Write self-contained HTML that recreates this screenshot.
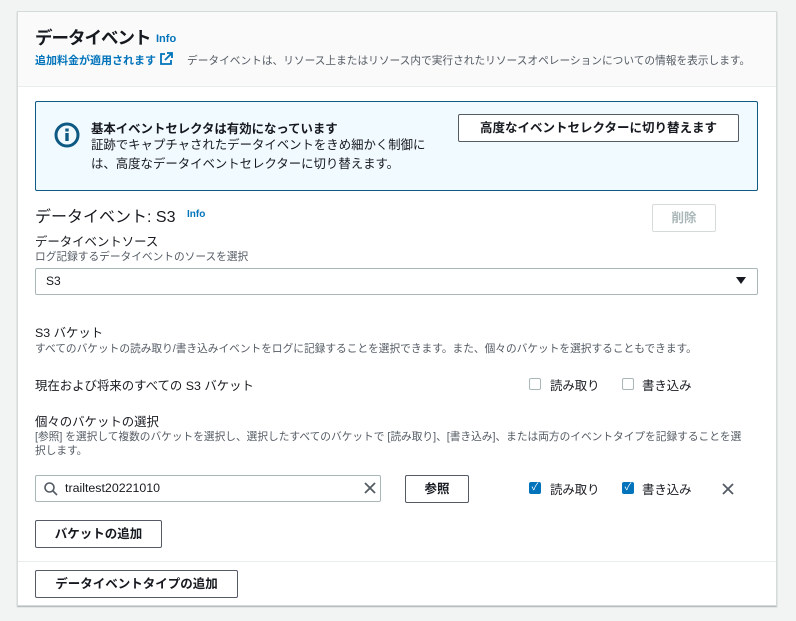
<!DOCTYPE html>
<html><head><meta charset="utf-8"><style>
*{box-sizing:border-box;margin:0;padding:0}
body{width:796px;height:621px;background:#f2f3f3;font-family:"Liberation Sans","Noto Sans CJK JP",sans-serif;color:#16191f;position:relative;overflow:hidden}
.a{position:absolute;white-space:nowrap}
.card{position:absolute;left:17px;top:11px;width:760px;height:595px;background:#fff;border:1px solid #d5dbdb;box-shadow:0 1px 1px rgba(0,28,36,.3)}
.hd{position:absolute;left:0;top:0;width:100%;height:75px;background:#fafafa;border-bottom:1px solid #eaeded}
.btn{position:absolute;border:1px solid #545b64;background:#fff;font-weight:bold;font-size:12.5px;color:#545b64;text-align:center;border-radius:2px}
.s{font-size:10.7px;color:#545b64}
.cb{position:absolute;width:12px;height:12px;border:1px solid #aab7b8;border-radius:2px;background:#fff}
.cbx{position:absolute;width:12px;height:12px;border-radius:2px;background:#0073bb;color:#fff;font-size:10px;line-height:12px;text-align:center}
</style></head><body>
<div class="card">
<div class="hd"></div>
</div>
<div class="a" style="left:35px;top:25px;font-size:17.5px;font-weight:bold;letter-spacing:-1px">データイベント</div>
<div class="a" style="left:156px;top:33px;font-size:11px;font-weight:bold;color:#0073bb">Info</div>
<div class="a" style="left:35px;top:52px;font-size:11px;font-weight:bold;color:#0073bb">追加料金が適用されます</div>
<svg class="a" style="left:159px;top:52px" width="14" height="14" viewBox="0 0 14 14" fill="none" stroke="#0073bb" stroke-width="1.8"><path d="M6 2H2v10h10V8M8 1h5v5M13 1L6 8"/></svg>
<div class="a s" style="left:187px;top:53px">データイベントは、リソース上またはリソース内で実行されたリソースオペレーションについての情報を表示します。</div>

<div class="a" style="left:35px;top:101px;width:723px;height:90px;background:#f1faff;border:1px solid #0f5a82;border-radius:2px"></div>
<svg class="a" style="left:54px;top:122px" width="26" height="26" viewBox="0 0 26 26"><circle cx="13" cy="13" r="11" fill="none" stroke="#0f5a82" stroke-width="3"/><rect x="11.3" y="11" width="3.4" height="8" fill="#0f5a82"/><rect x="11.3" y="6.5" width="3.4" height="3" fill="#0f5a82"/></svg>
<div class="a" style="left:91px;top:119px;font-size:12.4px;font-weight:bold">基本イベントセレクタは有効になっています</div>
<div class="a" style="left:91px;top:136px;font-size:12.4px;line-height:19px;color:#16191f">証跡でキャプチャされたデータイベントをきめ細かく制御に<br>は、高度なデータイベントセレクターに切り替えます。</div>
<div class="btn" style="left:458px;top:114px;width:281px;height:28px;line-height:26px;color:#16191f">高度なイベントセレクターに切り替えます</div>

<div class="a" style="left:35px;top:203px;font-size:16px">データイベント: S3</div>
<div class="a" style="left:187px;top:209px;font-size:10px;font-weight:bold;color:#0073bb">Info</div>
<div class="btn" style="left:652px;top:204px;width:64px;height:28px;line-height:26px;border-color:#d5dbdb;color:#aab7b8">削除</div>
<div class="a" style="left:35px;top:232px;font-size:12.4px">データイベントソース</div>
<div class="a s" style="left:35px;top:249px">ログ記録するデータイベントのソースを選択</div>
<div class="a" style="left:35px;top:268px;width:723px;height:27px;border:1px solid #aab7b8;border-radius:2px;font-size:12px;line-height:25px;padding-left:10px">S3</div>
<svg class="a" style="left:736px;top:277px" width="10" height="8" viewBox="0 0 10 8"><path d="M0 0h10L5 7z" fill="#16191f"/></svg>

<div class="a" style="left:35px;top:323px;font-size:12.4px">S3 バケット</div>
<div class="a s" style="left:35px;top:341px">すべてのバケットの読み取り/書き込みイベントをログに記録することを選択できます。また、個々のバケットを選択することもできます。</div>
<div class="a" style="left:35px;top:376px;font-size:12.4px">現在および将来のすべての S3 バケット</div>
<div class="cb" style="left:529px;top:378px"></div>
<div class="a" style="left:550px;top:376px;font-size:12.4px">読み取り</div>
<div class="cb" style="left:622px;top:378px"></div>
<div class="a" style="left:642px;top:376px;font-size:12.4px">書き込み</div>

<div class="a" style="left:35px;top:412px;font-size:12.4px">個々のバケットの選択</div>
<div class="a s" style="left:35px;top:430px;line-height:14px">[参照] を選択して複数のバケットを選択し、選択したすべてのバケットで [読み取り]、[書き込み]、または両方のイベントタイプを記録することを選<br>択します。</div>

<div class="a" style="left:35px;top:475px;width:346px;height:27px;border:1px solid #aab7b8;border-radius:2px"></div>
<svg class="a" style="left:43px;top:481px" width="16" height="16" viewBox="0 0 16 16" fill="none" stroke="#545b64" stroke-width="1.6"><circle cx="6.5" cy="6.5" r="4.5"/><path d="M10 10l4 4"/></svg>
<div class="a" style="left:65px;top:481px;font-size:12.4px">trailtest20221010</div>
<svg class="a" style="left:363px;top:481px" width="14" height="14" viewBox="0 0 14 14" stroke="#545b64" stroke-width="1.8"><path d="M2 2l10 10M12 2L2 12"/></svg>
<div class="btn" style="left:405px;top:475px;width:64px;height:28px;line-height:26px;color:#16191f">参照</div>
<div class="cbx" style="left:529px;top:482px">✓</div>
<div class="a" style="left:550px;top:480px;font-size:12.4px">読み取り</div>
<div class="cbx" style="left:622px;top:482px">✓</div>
<div class="a" style="left:642px;top:480px;font-size:12.4px">書き込み</div>
<svg class="a" style="left:721px;top:482px" width="14" height="14" viewBox="0 0 14 14" stroke="#545b64" stroke-width="1.8"><path d="M2 2l10 10M12 2L2 12"/></svg>

<div class="btn" style="left:35px;top:520px;width:127px;height:28px;line-height:26px;color:#16191f">バケットの追加</div>
<div class="a" style="left:18px;top:561px;width:758px;height:1px;background:#eaeded"></div>
<div class="btn" style="left:35px;top:570px;width:203px;height:28px;line-height:26px;color:#16191f">データイベントタイプの追加</div>
</body></html>
